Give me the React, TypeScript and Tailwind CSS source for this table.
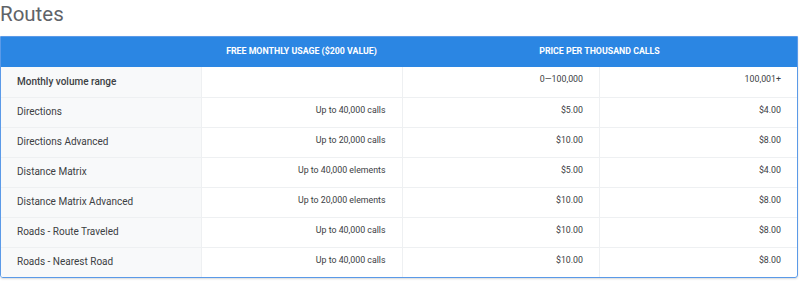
const rows = [
  { name: "Directions", free: "Up to 40,000 calls", low: "$5.00", high: "$4.00" },
  { name: "Directions Advanced", free: "Up to 20,000 calls", low: "$10.00", high: "$8.00" },
  { name: "Distance Matrix", free: "Up to 40,000 elements", low: "$5.00", high: "$4.00" },
  { name: "Distance Matrix Advanced", free: "Up to 20,000 elements", low: "$10.00", high: "$8.00" },
  { name: "Roads - Route Traveled", free: "Up to 40,000 calls", low: "$10.00", high: "$8.00" },
  { name: "Roads - Nearest Road", free: "Up to 40,000 calls", low: "$10.00", high: "$8.00" },
];

export default function App() {
  return (
    <div className="h-[284px] w-[800px] overflow-hidden bg-white font-['Roboto',sans-serif]">
      <h1 className="h-[36px] text-[20.5px] leading-[28px] font-normal text-[#5f6368]">Routes</h1>
      <div className="mr-[2px] overflow-hidden rounded-b-[3px] border border-[#5b9ae8] shadow-[0_1px_2px_rgba(60,64,67,0.2)]">
        <table className="w-full table-fixed border-collapse">
          <thead>
            <tr className="h-[30px] bg-[#2b86e3] text-[8.8px] font-medium text-white">
              <th className="w-[200px]" />
              <th className="w-[201px]">FREE MONTHLY USAGE ($200 VALUE)</th>
              <th colSpan={2}>PRICE PER THOUSAND CALLS</th>
            </tr>
          </thead>
          <tbody className="text-[8.8px] leading-[12px] text-[#3c4043]">
            <tr className="h-[30px] border-b border-[#eef0f2]">
              <td className="bg-[#f8f9fa] pl-4 text-[10px] font-medium">Monthly volume range</td>
              <td className="border-l border-[#eef0f2]" />
              <td className="border-l border-[#eef0f2] pr-4 pt-[6px] text-right align-top">0—100,000</td>
              <td className="border-l border-[#eef0f2] pr-4 pt-[6px] text-right align-top">100,001+</td>
            </tr>
            {rows.map((r, i) => (
              <tr key={r.name} className={`h-[30px] ${i < rows.length - 1 ? "border-b border-[#eef0f2]" : ""}`}>
                <td className="bg-[#f8f9fa] pl-4 text-[10px]">{r.name}</td>
                <td className="border-l border-[#eef0f2] pr-4 pt-[6px] text-right align-top">{r.free}</td>
                <td className="border-l border-[#eef0f2] pr-4 pt-[6px] text-right align-top">{r.low}</td>
                <td className="border-l border-[#eef0f2] pr-4 pt-[6px] text-right align-top">{r.high}</td>
              </tr>
            ))}
          </tbody>
        </table>
      </div>
    </div>
  );
}
